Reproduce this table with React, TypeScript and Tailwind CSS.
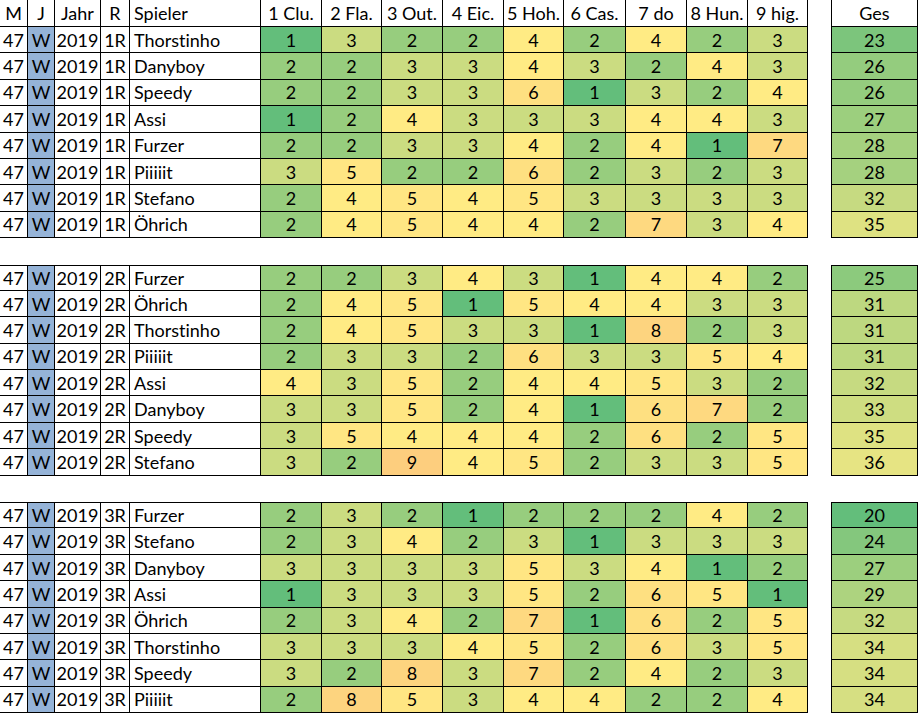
import React from 'react';

interface Row {
  name: string;
  scores: number[];
}

interface Block {
  round: string;
  rows: Row[];
}

const blocks: Block[] = [
  {
    round: '1R',
    rows: [
      { name: 'Thorstinho', scores: [1, 3, 2, 2, 4, 2, 4, 2, 3] },
      { name: 'Danyboy', scores: [2, 2, 3, 3, 4, 3, 2, 4, 3] },
      { name: 'Speedy', scores: [2, 2, 3, 3, 6, 1, 3, 2, 4] },
      { name: 'Assi', scores: [1, 2, 4, 3, 3, 3, 4, 4, 3] },
      { name: 'Furzer', scores: [2, 2, 3, 3, 4, 2, 4, 1, 7] },
      { name: 'Piiiiit', scores: [3, 5, 2, 2, 6, 2, 3, 2, 3] },
      { name: 'Stefano', scores: [2, 4, 5, 4, 5, 3, 3, 3, 3] },
      { name: 'Öhrich', scores: [2, 4, 5, 4, 4, 2, 7, 3, 4] },
    ],
  },
  {
    round: '2R',
    rows: [
      { name: 'Furzer', scores: [2, 2, 3, 4, 3, 1, 4, 4, 2] },
      { name: 'Öhrich', scores: [2, 4, 5, 1, 5, 4, 4, 3, 3] },
      { name: 'Thorstinho', scores: [2, 4, 5, 3, 3, 1, 8, 2, 3] },
      { name: 'Piiiiit', scores: [2, 3, 3, 2, 6, 3, 3, 5, 4] },
      { name: 'Assi', scores: [4, 3, 5, 2, 4, 4, 5, 3, 2] },
      { name: 'Danyboy', scores: [3, 3, 5, 2, 4, 1, 6, 7, 2] },
      { name: 'Speedy', scores: [3, 5, 4, 4, 4, 2, 6, 2, 5] },
      { name: 'Stefano', scores: [3, 2, 9, 4, 5, 2, 3, 3, 5] },
    ],
  },
  {
    round: '3R',
    rows: [
      { name: 'Furzer', scores: [2, 3, 2, 1, 2, 2, 2, 4, 2] },
      { name: 'Stefano', scores: [2, 3, 4, 2, 3, 1, 3, 3, 3] },
      { name: 'Danyboy', scores: [3, 3, 3, 3, 5, 3, 4, 1, 2] },
      { name: 'Assi', scores: [1, 3, 3, 3, 5, 2, 6, 5, 1] },
      { name: 'Öhrich', scores: [2, 3, 4, 2, 7, 1, 6, 2, 5] },
      { name: 'Thorstinho', scores: [3, 3, 3, 4, 5, 2, 6, 3, 5] },
      { name: 'Speedy', scores: [3, 2, 8, 3, 7, 2, 4, 2, 3] },
      { name: 'Piiiiit', scores: [2, 8, 5, 3, 4, 4, 2, 2, 4] },
    ],
  },
];

const holes = ['1 Clu.', '2 Fla.', '3 Out.', '4 Eic.', '5 Hoh.', '6 Cas.', '7 do', '8 Hun.', '9 hig.'];
const holeW = ['w-[61px]', 'w-[60px]', 'w-[61px]', 'w-[61px]', 'w-[60px]', 'w-[62px]', 'w-[61px]', 'w-[61px]', 'w-[60px]'];

// colour scale per stroke count (green -> yellow -> orange)
const scoreBg: Record<number, string> = {
  1: 'bg-[#63be7b]',
  2: 'bg-[#97cd7e]',
  3: 'bg-[#cbdc81]',
  4: 'bg-[#ffeb84]',
  5: 'bg-[#ffe683]',
  6: 'bg-[#fee081]',
  7: 'bg-[#fed980]',
  8: 'bg-[#fdd47f]',
  9: 'bg-[#fdce7e]',
};

const totalBg: Record<number, string> = {
  20: 'bg-[#63be7b]',
  23: 'bg-[#7cc57c]',
  24: 'bg-[#84c77d]',
  25: 'bg-[#8cca7d]',
  26: 'bg-[#94cc7e]',
  27: 'bg-[#9ccf7e]',
  28: 'bg-[#a5d17f]',
  29: 'bg-[#add37f]',
  31: 'bg-[#bdd880]',
  32: 'bg-[#c6da81]',
  33: 'bg-[#cedd81]',
  34: 'bg-[#d6df82]',
  35: 'bg-[#dee282]',
  36: 'bg-[#e6e483]',
};

const cell = 'h-full flex items-center border-r border-b border-black';

const App: React.FC = () => {
  return (
    <div
      className="w-[920px] h-[715px] bg-white text-black text-[18px] leading-none overflow-hidden [font-variant-ligatures:none]"
      style={{ fontFamily: 'Lato, "Open Sans", sans-serif' }}
    >
      {/* header */}
      <div className="flex h-[27px]">
        <div className={`${cell} w-[28px] justify-center`}>M</div>
        <div className={`${cell} w-[27px] justify-center`}>J</div>
        <div className={`${cell} w-[46px] justify-center`}>Jahr</div>
        <div className={`${cell} w-[29px] justify-center`}>R</div>
        <div className={`${cell} w-[131px] pl-[4px]`}>Spieler</div>
        {holes.map((h, i) => (
          <div key={h} className={`${cell} ${holeW[i]} justify-center`}>{h}</div>
        ))}
        <div className="w-[23px]" />
        <div className={`${cell} w-[87px] border-l justify-center`}>Ges</div>
      </div>

      {blocks.map((block, bi) => (
        <div key={block.round}>
          {bi > 0 && <div className="h-[26.4px]" />}
          {block.rows.map((row, ri) => {
            const top = bi > 0 && ri === 0 ? 'border-t' : '';
            const total = row.scores.reduce((a, b) => a + b, 0);
            return (
              <div key={row.name} className="flex h-[26.4px]">
                <div className={`${cell} ${top} w-[28px] justify-center`}>47</div>
                <div className={`${cell} ${top} w-[27px] justify-center bg-[#95b3d7]`}>W</div>
                <div className={`${cell} ${top} w-[46px] justify-center`}>2019</div>
                <div className={`${cell} ${top} w-[29px] justify-center`}>{block.round}</div>
                <div className={`${cell} ${top} w-[131px] pl-[4px]`}>{row.name}</div>
                {row.scores.map((s, i) => (
                  <div key={i} className={`${cell} ${top} ${holeW[i]} ${scoreBg[s]} justify-center`}>{s}</div>
                ))}
                <div className="w-[23px]" />
                <div className={`${cell} ${top} w-[87px] border-l ${totalBg[total]} justify-center`}>{total}</div>
              </div>
            );
          })}
        </div>
      ))}
    </div>
  );
};

export default App;
